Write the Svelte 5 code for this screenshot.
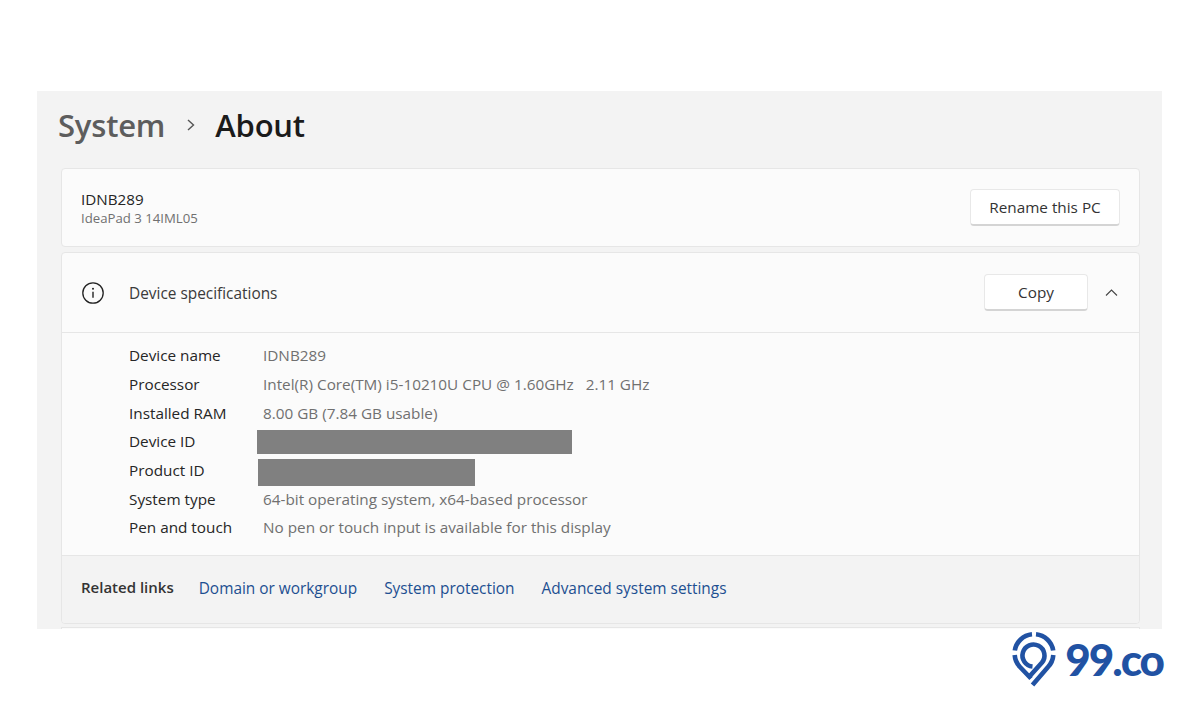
<script>
    const specs = [
        { label: 'Device name', value: 'IDNB289' },
        { label: 'Processor', value: 'Intel(R) Core(TM) i5-10210U CPU @ 1.60GHz   2.11 GHz' },
        { label: 'Installed RAM', value: '8.00 GB (7.84 GB usable)' },
        { label: 'Device ID', hidden: 'device' },
        { label: 'Product ID', hidden: 'product' },
        { label: 'System type', value: '64-bit operating system, x64-based processor' },
        { label: 'Pen and touch', value: 'No pen or touch input is available for this display' }
    ];

    const links = ['Domain or workgroup', 'System protection', 'Advanced system settings'];
</script>

<div class="page">
    <div class="panel">
        <div class="crumbs">
            <span class="parent">System</span>
            <svg class="sep" width="10" height="12" viewBox="0 0 10 12"><path d="M2 1 7.500 6 2 11" fill="none" stroke="#555" stroke-width="1.4"/></svg>
            <span class="current">About</span>
        </div>

        <div class="card pc">
            <div>
                <div class="pc-name">IDNB289</div>
                <div class="pc-model">IdeaPad 3 14IML05</div>
            </div>
            <button class="btn rename">Rename this PC</button>
        </div>

        <div class="card specs">
            <div class="specs-head">
                <svg class="info" width="24" height="24" viewBox="0 0 24 24">
                    <circle cx="12" cy="12" r="10.2" fill="none" stroke="#222" stroke-width="1.3"/>
                    <path d="M12 10.8v6" stroke="#222" stroke-width="1.4"/>
                    <circle cx="12" cy="7.8" r="1" fill="#222"/>
                </svg>
                <span class="specs-title">Device specifications</span>
                <button class="btn copy">Copy</button>
                <svg class="chev" width="13" height="7" viewBox="0 0 13 7"><path d="M1 6.500 6.500 1 12 6.500" fill="none" stroke="#444" stroke-width="1.1"/></svg>
            </div>

            <div class="spec-list">
                {#each specs as row}
                    <div class="spec-label">{row.label}</div>
                    <div class="spec-value">
                        {#if row.hidden}
                            <div class="redact {row.hidden}"></div>
                        {:else}
                            {row.value}
                        {/if}
                    </div>
                {/each}
            </div>

            <div class="related">
                <span class="related-label">Related links</span>
                {#each links as link}
                    <span class="link">{link}</span>
                {/each}
            </div>
        </div>
        <div class="stub"></div>
    </div>

    <div class="brand">
        <svg width="44" height="56" viewBox="0 0 44 56" fill="none" stroke="#2152a3" stroke-width="4.6">
            <path d="M20 2.300A19.300 19.300 0 0 0 2.800 18.500"/>
            <path d="M24 2.300A19.300 19.300 0 0 1 41.200 18.500"/>
            <path d="M2.700 23A19.300 19.300 0 0 0 8 35L19 46.500"/>
            <path d="M41.300 23A19.300 19.300 0 0 1 36 35L20.500 53"/>
            <path d="M20.500 34.500A11 11 0 1 1 30 30.500L17 45"/>
        </svg>
        <span class="brand-name">99.co</span>
    </div>
</div>

<style>
:global(body) {
    margin: 0;
    background: #fff;
}
.page {
    width: 1200px;
    height: 720px;
    box-sizing: border-box;
    padding: 91px 38px 0 37px;
    font-family: "Open Sans", "Noto Sans", sans-serif;
    color: #262626;
    overflow: hidden;
}
.panel {
    height: 538px;
    box-sizing: border-box;
    background: #f3f3f3;
    padding: 0 22px 0 24px;
    display: flex;
    flex-direction: column;
}
.crumbs {
    height: 77px;
    display: flex;
    align-items: center;
    padding-bottom: 9px;
    box-sizing: border-box;
    font-size: 31px;
    font-weight: 600;
}
.parent {
    color: #5d5d5d;
    margin-left: -3px;
    letter-spacing: -0.2px;
}
.sep {
    margin: 0 19px 0 21px;
}
.current {
    color: #1b1b1b;
    letter-spacing: -0.2px;
}
.card {
    background: #fbfbfb;
    border: 1px solid #e6e6e6;
    border-radius: 4px;
    box-sizing: border-box;
}
.pc {
    height: 79px;
    display: flex;
    align-items: center;
    justify-content: space-between;
    padding: 0 19px;
}
.pc-name {
    font-size: 15.200px;
    line-height: 20px;
}
.pc-model {
    font-size: 13.200px;
    line-height: 18px;
    color: #707070;
}
.btn {
    font-family: inherit;
    font-size: 15.300px;
    color: #333;
    background: #fff;
    border: 1px solid #e8e8e8;
    border-bottom: 2px solid #d4d4d4;
    border-radius: 4px;
    box-sizing: border-box;
    height: 37px;
    padding: 0;
}
.rename {
    width: 150px;
}
.copy {
    width: 104px;
    margin-right: 17px;
}
.specs {
    margin-top: 5px;
    height: 372px;
    display: flex;
    flex-direction: column;
}
.specs-head {
    height: 79px;
    display: flex;
    align-items: center;
    padding: 0 21px 0 19px;
    border-bottom: 1px solid #e6e6e6;
}
.info {
    margin-right: 24px;
}
.specs-title {
    font-size: 15.400px;
    color: #3a3a3a;
    flex: 1;
    margin-top: 1px;
}
.spec-list {
    height: 223px;
    box-sizing: border-box;
    padding: 8px 0 0 67px;
    display: grid;
    grid-template-columns: 134px 1fr;
    grid-auto-rows: 28.700px;
    align-items: center;
    font-size: 15.300px;
    border-bottom: 1px solid #e6e6e6;
}
.spec-value {
    color: #707070;
    white-space: pre;
}
.redact {
    background: #808080;
}
.device {
    width: 315px;
    height: 24px;
    margin-left: -6px;
    margin-top: 2px;
}
.product {
    width: 217px;
    height: 27px;
    margin-left: -5px;
    margin-top: 5px;
}
.related {
    flex: 1;
    background: #f3f3f3;
    display: flex;
    align-items: center;
    padding: 0 0 3px 19px;
    border-radius: 0 0 4px 4px;
    font-size: 15.400px;
}
.related-label {
    font-size: 15px;
    font-weight: 600;
    color: #333;
    margin-right: 25px;
    margin-top: -3px;
}
.link {
    color: #1d4f91;
    margin-right: 27px;
}
.stub {
    flex: 1;
    margin-top: 3px;
    background: #fbfbfb;
    border: 1px solid #e6e6e6;
    border-bottom: 0;
}
.brand {
    display: flex;
    align-items: center;
    justify-content: flex-end;
    gap: 9px;
    margin-top: 3px;
    margin-right: -1px;
}
.brand-name {
    font-family: "Lato", sans-serif;
    font-weight: 900;
    font-size: 44px;
    letter-spacing: -2px;
    color: #2152a3;
    line-height: 54px;
    margin-bottom: 2px;
}
</style>
